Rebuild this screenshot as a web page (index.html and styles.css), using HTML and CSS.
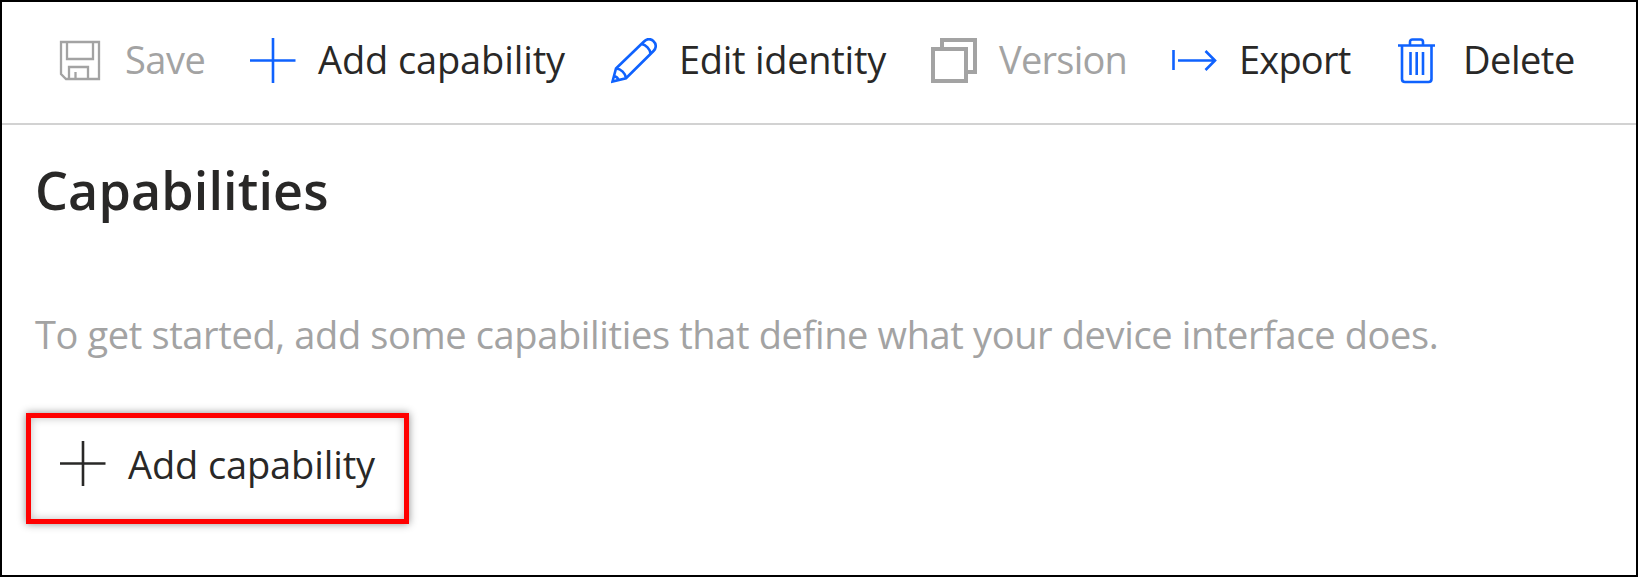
FILE: index.html
```html
<!DOCTYPE html>
<html lang="en">
<head>
<meta charset="utf-8">
<title>Capabilities</title>
<link rel="stylesheet" href="styles.css">
</head>
<body>
<div class="frame">
  <nav class="toolbar">
    <button class="command disabled">
      <svg class="icon" viewBox="0 0 46 46" fill="none" stroke="currentColor" stroke-width="2.300"><path d="M4 4H42V41H9L4 36ZM10 4V21H36V4M12 41V29H31V41M18.500 34V41"/></svg>
      <span class="label save">Save</span>
    </button>
    <button class="command">
      <svg class="icon accent" viewBox="0 0 46 46" fill="none" stroke="currentColor" stroke-width="2.6"><path d="M23 0V45M0 22.500H45.500"/></svg>
      <span class="label add">Add capability</span>
    </button>
    <button class="command">
      <svg class="icon accent" viewBox="0 0 46 46" fill="none" stroke="currentColor" stroke-width="2.600"><path d="M1.500 43.500L5 30.500L33 3.500C36 .3 40 .5 42.500 3.200C45.500 6 45.500 10 42.500 13L15 40.200ZM5 30.500C10 31 14.500 35 15 40.200M30.500 6C35 7 39 11 39.500 15.500M3 38C5 38.500 7 40 7.500 42"/></svg>
      <span class="label edit">Edit identity</span>
    </button>
    <button class="command disabled">
      <svg class="icon" viewBox="0 0 46 46" fill="none" stroke="currentColor" stroke-width="4"><path d="M2 11H35V43H2ZM11 10V2H44V34H36"/></svg>
      <span class="label version">Version</span>
    </button>
    <button class="command">
      <svg class="icon accent" viewBox="0 0 46 46" fill="none" stroke="currentColor" stroke-width="2.600"><path d="M2.500 12V32M7 22.500H44M34.500 13L44 22.500L34.500 32"/></svg>
      <span class="label export">Export</span>
    </button>
    <button class="command">
      <svg class="icon accent" viewBox="0 0 46 46" fill="none" stroke="currentColor" stroke-width="2.600"><path d="M4 7.500H41M16 7V4Q16 1.500 18.500 1.500H26.500Q29 1.500 29 4V7M8 7.500V41Q8 44 11 44H34.500Q37.500 44 37.500 41V7.500M16.500 14V37M22.700 14V37M29 14V37"/></svg>
      <span class="label delete">Delete</span>
    </button>
  </nav>
  <main class="content">
    <h1 class="title">Capabilities</h1>
    <p class="hint">To get started, add some capabilities that define what your device interface does.</p>
    <button class="command add-button">
      <svg class="icon" viewBox="0 0 46 46" fill="none" stroke="currentColor" stroke-width="2.600"><path d="M23 0V45M0 22.500H45.500"/></svg>
      <span class="label add">Add capability</span>
    </button>
  </main>
</div>
</body>
</html>
```
FILE: styles.css
```css
* { box-sizing: border-box; }
body {
  margin: 0;
  background: #fff;
  color: #292827;
  font-family: "Open Sans", "Noto Sans", sans-serif;
}
.frame {
  height: 577px;
  border: 2px solid #000;
}
.toolbar {
  display: grid;
  grid-template-columns: 193px 361px 320px 240px 223px 1fr;
  height: 123px;
  padding: 0 0 4px 55px;
  border-bottom: 2px solid #d2d2d2;
}
.command {
  display: flex;
  align-items: center;
  gap: 22px;
  padding: 0;
  border: 0;
  background: none;
  color: inherit;
  font: 400 38px/54px "Open Sans", "Noto Sans", sans-serif;
  white-space: nowrap;
}
.icon { width: 46px; height: 46px; flex: none; }
.label { padding-bottom: 3px; }
.save { letter-spacing: -.5px; }
.add { letter-spacing: -.12px; }
.edit { letter-spacing: -.28px; }
.version { letter-spacing: -.75px; }
.export { letter-spacing: -.8px; }
.delete { padding-left: 1px; letter-spacing: -.5px; }
.accent { color: #0f62fe; }
.disabled { color: #a3a3a3; }
.content { padding: 30px 0 0 33px; }
.title {
  margin: 0;
  font-size: 52px;
  font-weight: 600;
  line-height: 70px;
  letter-spacing: .15px;
}
.hint {
  margin: 82px 0 0;
  color: #a3a3a3;
  font-size: 38px;
  line-height: 54px;
  letter-spacing: -.37px;
  white-space: nowrap;
}
.add-button {
  width: 383px;
  height: 111px;
  margin: 52px 0 0 -9px;
  padding: 0 0 9px 29px;
  border: 5px solid #f00;
  box-shadow: 0 0 8px rgba(0, 0, 0, .45), inset 0 0 8px rgba(0, 0, 0, .25);
}
.add-button .label { padding-bottom: 1px; }
```
